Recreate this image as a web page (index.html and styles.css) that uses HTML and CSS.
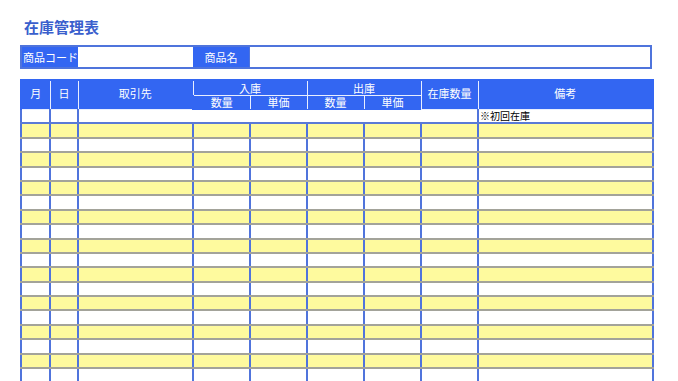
FILE: index.html
```html
<!DOCTYPE html>
<html lang="ja">
<head>
<meta charset="utf-8">
<title>在庫管理表</title>
<link rel="stylesheet" href="styles.css">
</head>
<body>
<div class="page">
  <h1 class="title">在庫管理表</h1>
  <div class="product">
    <div class="label label-code">商品コード</div>
    <div class="field field-code"></div>
    <div class="label label-name">商品名</div>
    <div class="field field-name"></div>
  </div>
  <table class="ledger">
    <colgroup>
      <col class="c-month"><col class="c-day"><col class="c-partner">
      <col class="c-num"><col class="c-num"><col class="c-num"><col class="c-num">
      <col class="c-num"><col class="c-note">
    </colgroup>
    <thead>
      <tr class="h1">
        <th rowspan="2">月</th>
        <th rowspan="2">日</th>
        <th rowspan="2">取引先</th>
        <th colspan="2" class="grp">入庫</th>
        <th colspan="2" class="grp">出庫</th>
        <th rowspan="2">在庫数量</th>
        <th rowspan="2">備考</th>
      </tr>
      <tr class="h2">
        <th>数量</th><th>単価</th><th>数量</th><th>単価</th>
      </tr>
    </thead>
    <tbody>
      <tr class="first">
        <td></td><td></td><td colspan="6"></td><td class="note">※初回在庫</td>
      </tr>
      <tr class="y"><td></td><td></td><td></td><td></td><td></td><td></td><td></td><td></td><td></td></tr>
      <tr><td></td><td></td><td></td><td></td><td></td><td></td><td></td><td></td><td></td></tr>
      <tr class="y"><td></td><td></td><td></td><td></td><td></td><td></td><td></td><td></td><td></td></tr>
      <tr><td></td><td></td><td></td><td></td><td></td><td></td><td></td><td></td><td></td></tr>
      <tr class="y"><td></td><td></td><td></td><td></td><td></td><td></td><td></td><td></td><td></td></tr>
      <tr><td></td><td></td><td></td><td></td><td></td><td></td><td></td><td></td><td></td></tr>
      <tr class="y"><td></td><td></td><td></td><td></td><td></td><td></td><td></td><td></td><td></td></tr>
      <tr><td></td><td></td><td></td><td></td><td></td><td></td><td></td><td></td><td></td></tr>
      <tr class="y"><td></td><td></td><td></td><td></td><td></td><td></td><td></td><td></td><td></td></tr>
      <tr><td></td><td></td><td></td><td></td><td></td><td></td><td></td><td></td><td></td></tr>
      <tr class="y"><td></td><td></td><td></td><td></td><td></td><td></td><td></td><td></td><td></td></tr>
      <tr><td></td><td></td><td></td><td></td><td></td><td></td><td></td><td></td><td></td></tr>
      <tr class="y"><td></td><td></td><td></td><td></td><td></td><td></td><td></td><td></td><td></td></tr>
      <tr><td></td><td></td><td></td><td></td><td></td><td></td><td></td><td></td><td></td></tr>
      <tr class="y"><td></td><td></td><td></td><td></td><td></td><td></td><td></td><td></td><td></td></tr>
      <tr><td></td><td></td><td></td><td></td><td></td><td></td><td></td><td></td><td></td></tr>
      <tr class="y"><td></td><td></td><td></td><td></td><td></td><td></td><td></td><td></td><td></td></tr>
      <tr><td></td><td></td><td></td><td></td><td></td><td></td><td></td><td></td><td></td></tr>
      <tr class="y"><td></td><td></td><td></td><td></td><td></td><td></td><td></td><td></td><td></td></tr>
    </tbody>
  </table>
</div>
</body>
</html>
```

FILE: styles.css
```css
html, body {
  margin: 0;
  padding: 0;
  background: #ffffff;
}

body {
  font-family: "Noto Sans CJK JP", "Noto Sans", sans-serif;
  overflow: hidden;
}

.page {
  padding: 16px 0 0 20px;
  width: 632px;
}

.title {
  margin: 0 0 0 4px;
  font-size: 15px;
  line-height: 22px;
  font-weight: bold;
  color: #3a5fcd;
  letter-spacing: 0;
}

.product {
  display: flex;
  margin-top: 7px;
  height: 20px;
  border: 2px solid #4f74dc;
  background: #ffffff;
}

.label {
  background: #3366f2;
  color: #ffffff;
  font-size: 11px;
  line-height: 20px;
}

.label-code {
  width: 55px;
  padding-left: 1px;
}

.field-code {
  width: 115px;
}

.label-name {
  width: 56px;
  text-align: center;
}

.field-name {
  flex: 1;
  border-left: 1px solid #4f74dc;
}

.ledger {
  margin-top: 10px;
  width: 632px;
  table-layout: fixed;
  border-collapse: collapse;
}

.c-month { width: 29px; }
.c-day { width: 28px; }
.c-partner { width: 115px; }
.c-num { width: 57px; }
.c-note { width: 175px; }

.ledger th {
  background: #3366f2;
  color: #ffffff;
  font-weight: normal;
  font-size: 11px;
  padding: 0;
  border: 1px solid #e8eeff;
  text-align: center;
  vertical-align: middle;
}

.ledger thead tr:first-child th {
  border-top: 2px solid #3366f2;
}

.ledger th:first-child {
  border-left: 2px solid #3366f2;
}

.ledger .h1 th:last-child {
  border-right: 2px solid #3366f2;
}

.ledger .h1 {
  height: 15px;
}

.ledger .h1 th[rowspan] {
  padding-bottom: 3px;
}

.ledger .h1 th.grp {
  line-height: 13px;
  vertical-align: bottom;
}

.ledger .h2 {
  height: 14px;
}

.ledger .h2 th {
  line-height: 12px;
  border-bottom: 1px solid #3366f2;
}

.ledger tbody tr {
  height: 14.4px;
}

.ledger td {
  padding: 0;
  border-left: 2px solid #5074dc;
  border-right: 2px solid #5074dc;
  border-bottom: 2px solid #a3a39a;
  background: #ffffff;
  font-size: 10px;
  line-height: 12px;
  color: #000000;
}

.ledger tr.y td {
  background: #fefa9e;
}

.ledger tr.first td {
  border-bottom: 2px solid #5a7ad6;
}

.ledger td.note {
  padding-left: 1px;
  text-align: left;
}
```
